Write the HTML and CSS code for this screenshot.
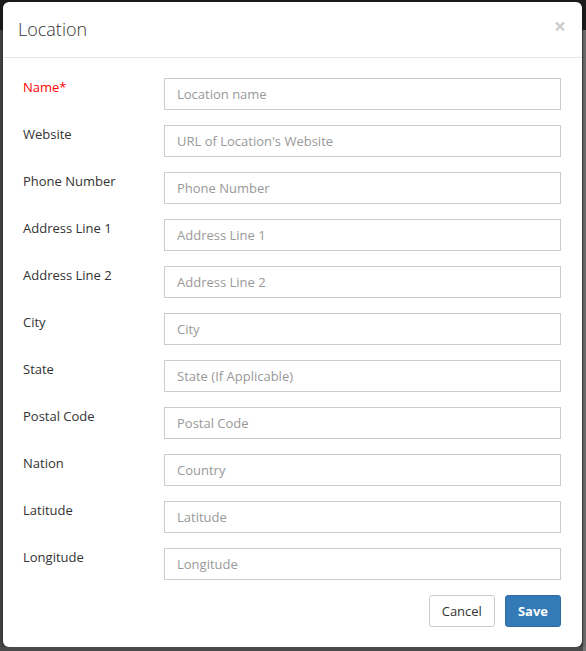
FILE: index.html
```html
<!DOCTYPE html>
<html lang="en">
<head>
<meta charset="utf-8">
<title>Location</title>
<link rel="stylesheet" href="styles.css">
</head>
<body>
<div class="modal">
  <div class="modal-header">
    <h4 class="modal-title">Location</h4>
    <button class="close" type="button" aria-label="Close">&times;</button>
  </div>
  <form class="modal-body">
    <div class="form-group">
      <label class="control-label required">Name*</label>
      <input class="form-control" type="text" placeholder="Location name">
    </div>
    <div class="form-group">
      <label class="control-label">Website</label>
      <input class="form-control" type="text" placeholder="URL of Location's Website">
    </div>
    <div class="form-group">
      <label class="control-label">Phone Number</label>
      <input class="form-control" type="text" placeholder="Phone Number">
    </div>
    <div class="form-group">
      <label class="control-label">Address Line 1</label>
      <input class="form-control" type="text" placeholder="Address Line 1">
    </div>
    <div class="form-group">
      <label class="control-label">Address Line 2</label>
      <input class="form-control" type="text" placeholder="Address Line 2">
    </div>
    <div class="form-group">
      <label class="control-label">City</label>
      <input class="form-control" type="text" placeholder="City">
    </div>
    <div class="form-group">
      <label class="control-label">State</label>
      <input class="form-control" type="text" placeholder="State (If Applicable)">
    </div>
    <div class="form-group">
      <label class="control-label">Postal Code</label>
      <input class="form-control" type="text" placeholder="Postal Code">
    </div>
    <div class="form-group">
      <label class="control-label">Nation</label>
      <input class="form-control" type="text" placeholder="Country">
    </div>
    <div class="form-group">
      <label class="control-label">Latitude</label>
      <input class="form-control" type="text" placeholder="Latitude">
    </div>
    <div class="form-group">
      <label class="control-label">Longitude</label>
      <input class="form-control" type="text" placeholder="Longitude">
    </div>
    <div class="form-actions">
      <button class="btn btn-default" type="button">Cancel</button>
      <button class="btn btn-primary" type="button">Save</button>
    </div>
  </form>
</div>
</body>
</html>
```

FILE: styles.css
```css
html {
  background:
    linear-gradient(to right, transparent 583px, #767676 583px) 0 30px / 100% 100% no-repeat,
    linear-gradient(#1d1d1d 0, #1d1d1d 30px, #4a4a4a 30px);
  min-height: 100%;
}

body {
  margin: 0;
  padding: 2px 0 0 3px;
  font-family: "Open Sans", "Liberation Sans", sans-serif;
  font-size: 13px;
  color: #333;
}

.modal {
  width: 579px;
  height: 645px;
  background: #fff;
  border-radius: 6px;
  box-shadow: 0 2px 6px rgba(0, 0, 0, 0.55);
  box-sizing: border-box;
  display: flex;
  flex-direction: column;
}

.modal-header {
  display: flex;
  align-items: flex-start;
  justify-content: space-between;
  padding: 15px;
  height: 25px;
  border-bottom: 1px solid #e5e5e5;
}

.modal-title {
  margin: 0;
  font-size: 18px;
  font-weight: 300;
  line-height: 25px;
  color: #333;
}

.close {
  border: 0;
  background: transparent;
  padding: 0;
  margin: -1px 1px 0 0;
  font-family: "Open Sans", "Liberation Sans", sans-serif;
  font-size: 21px;
  font-weight: 700;
  line-height: 21px;
  color: #000;
  opacity: 0.2;
  cursor: pointer;
}

.modal-body {
  padding: 20px 21px 20px 20px;
  display: flex;
  flex-direction: column;
  gap: 15px;
}

.form-group {
  display: grid;
  grid-template-columns: 141px 1fr;
  align-items: start;
}

.control-label {
  font-size: 13px;
  line-height: 28px;
  margin-top: -5px;
  color: #333;
}

.control-label.required {
  color: #f00;
}

.form-control {
  height: 32px;
  box-sizing: border-box;
  border: 1px solid #ccc;
  border-radius: 0;
  padding: 0 12px;
  font-family: "Open Sans", "Liberation Sans", sans-serif;
  font-size: 13px;
  color: #555;
  background: #fff;
  outline: none;
  width: 100%;
}

.form-control::placeholder {
  color: #999;
}

.form-actions {
  display: flex;
  justify-content: flex-end;
  gap: 10px;
}

.btn {
  height: 32px;
  box-sizing: border-box;
  padding: 0 12px;
  border-radius: 3px;
  font-family: "Open Sans", "Liberation Sans", sans-serif;
  font-size: 13px;
  line-height: 30px;
  cursor: pointer;
}

.btn-default {
  background: #fff;
  border: 1px solid #ccc;
  color: #333;
}

.btn-primary {
  background: #337ab7;
  border: 1px solid #2e6da4;
  color: #fff;
  font-weight: 700;
}
```
